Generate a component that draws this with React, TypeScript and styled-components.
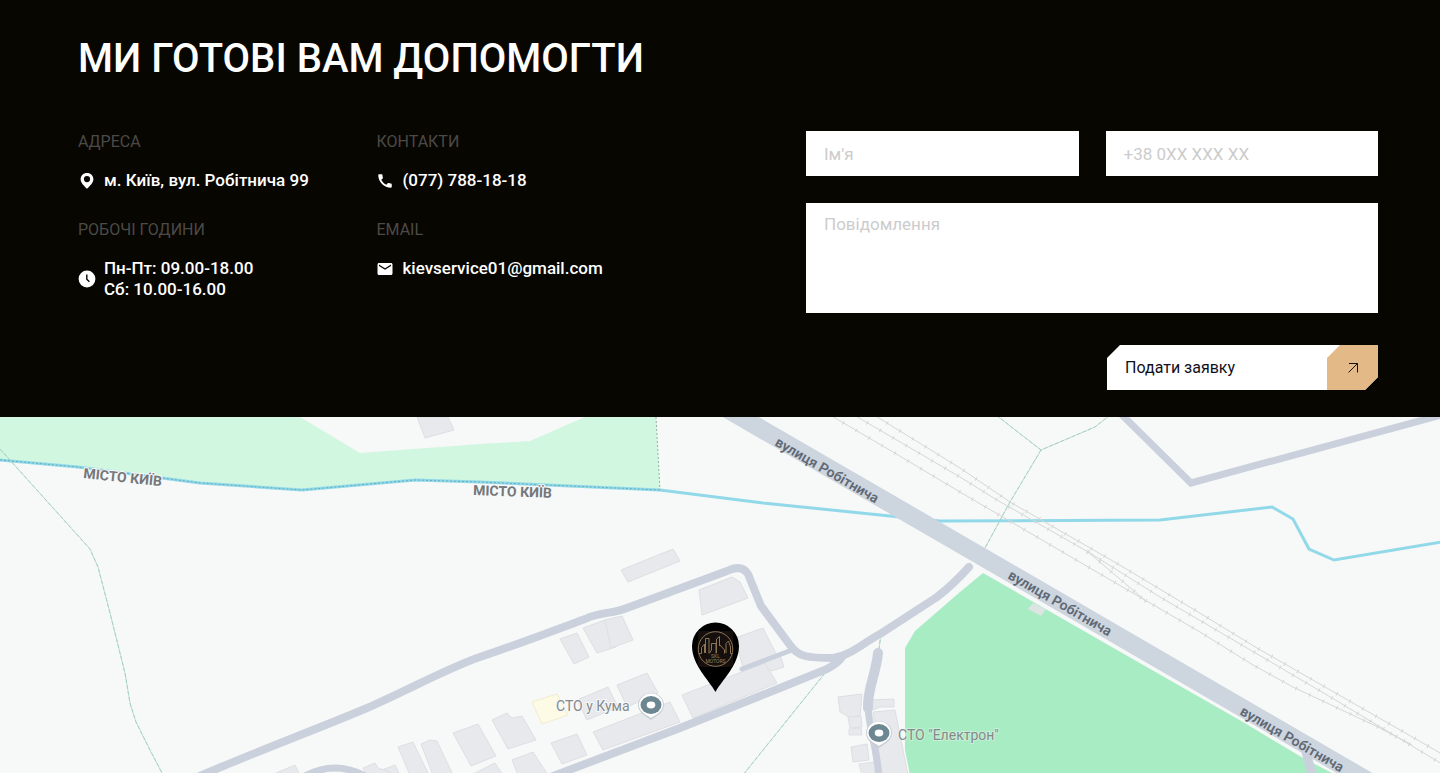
import React from "react";
import styled, { createGlobalStyle } from "styled-components";

const GlobalStyle = createGlobalStyle`
  *, *::before, *::after { box-sizing: border-box; }
  body {
    margin: 0;
    background: #f7f8f8;
    color: #fff;
    font-family: Roboto, "Liberation Sans", sans-serif;
    font-size: 17px;
    line-height: 21px;
  }
`;

const Section = styled.section`
  padding: 34px 62px 27px 78px;
  background: #080601;
`;

const Title = styled.h2`
  margin: 0 0 47px;
  font-size: 40px;
  line-height: 50px;
  font-weight: 500;
  text-transform: uppercase;
`;

const Columns = styled.div`
  display: grid;
  grid-template-columns: minmax(0, 1fr) 44%;
  align-items: start;
`;

const Details = styled.div`
  display: grid;
  grid-template-columns: 41% 1fr;
  row-gap: 28px;
`;

const Detail = styled.div`
  display: flex;
  flex-direction: column;
  gap: 18px;
`;

const DetailLabel = styled.h3`
  margin: 0;
  font-size: 16px;
  font-weight: 400;
  text-transform: uppercase;
  color: #4c4a47;
`;

const DetailValue = styled.div`
  display: flex;
  align-items: center;
  gap: 8px;
  color: #fff;
  font-weight: 500;
  svg { flex: none; }
`;

const DetailLink = styled.a`
  color: inherit;
  text-decoration: none;
`;

const Form = styled.form`
  display: grid;
  grid-template-columns: 1fr 1fr;
  gap: 27px;
`;

const Field = styled.input`
  width: 100%;
  height: 45px;
  padding: 0 18px;
  border: 0;
  border-radius: 0;
  background: #fff;
  color: #080601;
  font: inherit;
  &::placeholder { color: #ccc; opacity: 1; }
`;

const Message = styled.textarea`
  grid-column: 1 / -1;
  display: block;
  width: 100%;
  height: 110px;
  padding: 11px 18px;
  border: 0;
  border-radius: 0;
  resize: none;
  background: #fff;
  color: #080601;
  font: inherit;
  &::placeholder { color: #ccc; opacity: 1; }
`;

const Submit = styled.button`
  grid-column: 2;
  justify-self: end;
  display: flex;
  width: 271px;
  height: 45px;
  margin-top: 5px;
  padding: 0;
  border: 0;
  background: #fff;
  color: #10101c;
  font: inherit;
  font-size: 16px;
  text-align: left;
  cursor: pointer;
  clip-path: polygon(13px 0, 100% 0, 100% calc(100% - 13px), calc(100% - 13px) 100%, 0 100%, 0 13px);
`;

const SubmitText = styled.span`
  flex: 1;
  align-self: center;
  padding-left: 18px;
`;

const SubmitArrow = styled.span`
  display: flex;
  align-items: center;
  justify-content: center;
  width: 51px;
  align-self: stretch;
  background: #e4b988;
  clip-path: polygon(13px 0, 100% 0, 100% 100%, 0 100%, 0 13px);
`;

const MapDrawing = styled.svg`
  display: block;
  width: 100%;
  height: auto;
  background: #f7f8f8;
  font-family: Roboto, "Liberation Sans", sans-serif;
`;

const buildings = [
  "417,417 448,417 454,430 425,438",
  "621,570 673,549 680,561 628,582",
  "699,590 732,577 740,582 748,598 702,615",
  "560,639 577,633 589,657 574,664",
  "583,628 605,620 616,647 597,653",
  "605,620 622,616 633,640 611,648",
  "735,638 763,628 775,652 781,658 784,667 771,671 766,666 745,675",
  "682,695 765,663 777,683 693,718",
  "577,700 608,687 618,707 587,720",
  "617,685 647,673 658,693 627,707",
  "593,732 670,702 680,722 603,750",
  "551,743 577,734 587,755 562,764",
  "492,720 507,713 512,718 522,716 536,740 508,749",
  "512,760 533,752 548,775 518,775",
  "453,733 478,724 496,756 471,766",
  "398,747 413,742 429,775 410,775",
  "421,744 430,740 437,741 453,775 433,775",
  "379,771 395,765 400,775 380,775",
  "471,775 495,763 503,775",
  "276,773 295,765 300,775",
  "363,768 375,763 378,768 390,772 390,775 367,775",
  "838,697 862,694 860,716 849,717 840,712",
  "848,717 861,716 862,727 850,728",
  "849,729 861,728 862,735 849,735",
  "870,700 894,699 894,707 880,707 870,711",
  "873,712 895,710 908,775 882,775",
  "851,747 867,744 869,760 853,762",
  "859,764 875,762 877,775 862,775",
];

const streets = [
  { d: "M200 776C240 758 330 724 367 708S450 667 480 657 550 632 585 619C600 612 612 614 627 608L727 571Q742 564 748 574L761 606 790 645C798 657 808 658 833 658 852 655 866 641 880 634L937 597C950 587 960 577 969 567", w: 8 },
  { d: "M540 781L680 728 780 688 827 669Q838 663 842 657", w: 8 },
  { d: "M742 669L792 650", w: 5 },
  { d: "M298 780Q335 756 372 780", w: 7 },
  { d: "M878 653C876 674 867 690 868 708", w: 10 },
  { d: "M868 704C868 727 876 740 879 778", w: 7 },
  { d: "M1117 410L1191 483 1445 414", w: 7 },
  { d: "M1306 752L1313 778", w: 9 },
];

const footpaths = [
  "M0 449L90 549 98 567 110 613 125 673 130 703 136 722 150 750 163 775",
  "M996 415L1041 450 1095 427 1110 415",
  "M1041 450L1010 502 985 548",
  "M825 673L743 775",
  "M881 634L879 649",
];

const rails = [
  "M874 415L960 468 1010 502 1118 564 1198 612 1257 648 1442 754",
  "M854 415L960 477 997 500 1090 553 1160 597 1247 648 1327 695 1397 737 1442 764",
  "M830 415L893 452 960 492 1013 523 1107 578 1200 632 1253 665 1293 687 1380 728 1412 745",
  "M1088 552L1147 602",
];

const river =
  "M0 460L78 467 200 483 302 490 415 480 480 482 660 490 763 503 890 516 940 521 1160 520 1272 507 1293 519 1309 549 1334 560 1442 542";

const PinIcon = () => (
  <svg width="18" height="18" viewBox="0 0 18 18" aria-hidden="true">
    <path fill="#fff" fillRule="evenodd" d="M9 1C5.300 1 2.600 3.700 2.600 7.200c0 3.700 3.300 6.300 6.400 9.600 3.100-3.300 6.400-5.900 6.400-9.600C15.400 3.700 12.700 1 9 1Zm0 9.200a3.100 3.100 0 1 1 0-6.200 3.100 3.100 0 0 1 0 6.200Z" />
  </svg>
);

const ClockIcon = () => (
  <svg width="18" height="18" viewBox="0 0 18 18" aria-hidden="true">
    <circle cx="9" cy="9" r="8.400" fill="#fff" />
    <path d="M8.800 4.500V9.200l2.600 2.600" fill="none" stroke="#080601" strokeWidth="1.400" />
  </svg>
);

const PhoneIcon = () => (
  <svg width="18" height="18" viewBox="0 0 24 24" aria-hidden="true">
    <path fill="#fff" d="M20.010 15.380c-1.230 0-2.420-.200-3.530-.560a.977.977 0 0 0-1.010.240l-1.570 1.970c-2.830-1.350-5.480-3.900-6.890-6.830l1.950-1.660c.270-.280.350-.670.240-1.020-.370-1.110-.560-2.300-.560-3.530 0-.540-.450-.990-.990-.990H4.190C3.650 3 3 3.240 3 3.990 3 13.280 10.730 21 20.010 21c.710 0 .990-.630.990-1.180v-3.450c0-.540-.450-.990-.990-.990z" />
  </svg>
);

const MailIcon = () => (
  <svg width="18" height="18" viewBox="0 0 24 24" aria-hidden="true">
    <path fill="#fff" d="M20 4H4c-1.100 0-1.990.900-1.990 2L2 18c0 1.100.900 2 2 2h16c1.100 0 2-.900 2-2V6c0-1.100-.900-2-2-2zm0 4l-8 5-8-5V6l8 5 8-5v2z" />
  </svg>
);

const ArrowIcon = () => (
  <svg width="12" height="12" viewBox="0 0 12 12" aria-hidden="true">
    <path d="M1.500 10.500L10.500 1.500M2 1.500H10.500V10.500" fill="none" stroke="#15110c" strokeWidth="1" />
  </svg>
);

const PlaceMarker = ({ x, y }: { x: number; y: number }) => (
  <g transform={`translate(${x} ${y})`}>
    <path d="M0 15C-4 12-13 8-13 0A13 12 0 0 1 13 0C13 8 4 12 0 15Z" fill="#c9ced3" />
    <path d="M0 13C-4 10-12 7-12 0A12 11.500 0 0 1 12 0C12 7 4 10 0 13Z" fill="#fff" />
    <ellipse rx="10.500" ry="9" fill="#6c8792" />
    <ellipse rx="4.300" ry="3.400" fill="#fff" />
  </g>
);

const CompanyMarker = () => (
  <g>
    <path d="M715.500 692C709 680 692 665 692 646A23.500 23.500 0 0 1 739 646C739 665 722 680 715.500 692Z" fill="#000" />
    <rect x="698" y="631" width="35" height="36" fill="#15100e" />
    <g fill="none" stroke="#8d7454" strokeWidth="1">
      <circle cx="715.500" cy="649" r="17.300" />
      <path d="M699 653.500H701.500V647.500L704.500 644V653M705.500 653V638.500H709V653.500M709.500 653L711.500 650V643.500H716V653.500M716.500 653V639L719.500 636.500V646M720 645L724.500 650V653.500M726 653V643.500L728.500 641 730.500 647V653.500H732" />
    </g>
    <g fill="#9a8059" fontSize="5" textAnchor="middle">
      <text x="715.500" y="658">SKL</text>
      <text x="715.500" y="663">MOTORS</text>
    </g>
  </g>
);

const LocationMap = () => (
  <MapDrawing viewBox="0 417 1440 356" role="img" aria-label="Мапа проїзду">
    <path d="M0 417H300L360 453 480 444 530 441 585 417H656L660 490 480 482 415 480 302 490 200 483 78 467 0 460Z" fill="#d2f7e1" />
    <path d="M983 573L960 592 915 631 905 648V750L910 775H1336L1303 758 1243 722 1110 646Z" fill="#a8ecc3" />
    <g fill="#e7e9ec" stroke="#dddfe2" strokeWidth="1">
      {buildings.map((points) => <polygon key={points} points={points} />)}
    </g>
    <polygon points="532,702 557,694 568,715 542,724" fill="#fdfae6" stroke="#f3edcb" />
    <polygon points="1028,609 1033,603 1046,609 1041,616" fill="#dce5e2" />
    <path d={river} fill="none" stroke="#91d9e9" strokeWidth="3" />
    <path d="M0 460L78 467 200 483 302 490 415 480 480 482 660 490" fill="none" stroke="#65aeba" strokeWidth="1" strokeDasharray="2 2" />
    <path d="M656 417L660 490" fill="none" stroke="#8eb3a0" strokeWidth="1" strokeDasharray="2 2" />
    <g fill="none" stroke="#d5d6d6">
      {rails.map((d) => (
        <g key={d}>
          <path d={d} strokeWidth="1" />
          <path d={d} strokeWidth="4" strokeDasharray="1 14" />
        </g>
      ))}
    </g>
    <g fill="none" stroke="#a5d2bd" strokeWidth="1">
      {footpaths.map((d) => (
        <g key={d}>
          <path d={d} opacity="0.600" />
          <path d={d} strokeDasharray="4 2" />
        </g>
      ))}
    </g>
    <path d="M720 405L960 544 1370 782" fill="none" stroke="#cdd5df" strokeWidth="18" />
    <g fill="none" stroke="#cad1dc" strokeLinecap="round">
      {streets.map(({ d, w }) => <path key={d} d={d} strokeWidth={w} />)}
    </g>
    <g fill="#5f6873" fontSize="14" fontWeight="600">
      <text transform="translate(774 445) rotate(30)">вулиця Робітнича</text>
      <text transform="translate(1007 578) rotate(30)">вулиця Робітнича</text>
      <text transform="translate(1239 714) rotate(30)">вулиця Робітнича</text>
    </g>
    <g fill="#74777a" stroke="#f7f8f8" strokeWidth="2" paintOrder="stroke" fontSize="14" fontWeight="700">
      <text transform="translate(83 478) rotate(6)">МІСТО КИЇВ</text>
      <text transform="translate(473 495) rotate(2)">МІСТО КИЇВ</text>
    </g>
    <g fill="#85898d" stroke="#f7f8f8" strokeWidth="2" paintOrder="stroke" fontSize="14">
      <text x="556" y="711">СТО у Кума</text>
      <text x="898" y="740" strokeOpacity="0.400">СТО "Електрон"</text>
    </g>
    <PlaceMarker x={651} y={705} />
    <PlaceMarker x={879} y={733} />
    <CompanyMarker />
  </MapDrawing>
);

export default function App() {
  return (
    <>
      <GlobalStyle />
      <main>
        <Section>
          <Title>Ми готові вам допомогти</Title>
          <Columns>
            <Details>
              <Detail>
                <DetailLabel>Адреса</DetailLabel>
                <DetailValue><PinIcon /><span>м. Київ, вул. Робітнича 99</span></DetailValue>
              </Detail>
              <Detail>
                <DetailLabel>Контакти</DetailLabel>
                <DetailValue><PhoneIcon /><DetailLink href="tel:0777881818">(077) 788-18-18</DetailLink></DetailValue>
              </Detail>
              <Detail>
                <DetailLabel>Робочі години</DetailLabel>
                <DetailValue><ClockIcon /><span>Пн-Пт: 09.00-18.00<br />Сб: 10.00-16.00</span></DetailValue>
              </Detail>
              <Detail>
                <DetailLabel>Email</DetailLabel>
                <DetailValue><MailIcon /><DetailLink href="mailto:kievservice01@gmail.com">kievservice01@gmail.com</DetailLink></DetailValue>
              </Detail>
            </Details>
            <Form onSubmit={(event) => event.preventDefault()}>
              <Field type="text" name="name" aria-label="Ім'я" placeholder="Ім'я" />
              <Field type="tel" name="phone" aria-label="Телефон" placeholder="+38 0XX XXX XX" />
              <Message name="message" aria-label="Повідомлення" placeholder="Повідомлення" />
              <Submit type="submit">
                <SubmitText>Подати заявку</SubmitText>
                <SubmitArrow><ArrowIcon /></SubmitArrow>
              </Submit>
            </Form>
          </Columns>
        </Section>
        <LocationMap />
      </main>
    </>
  );
}
